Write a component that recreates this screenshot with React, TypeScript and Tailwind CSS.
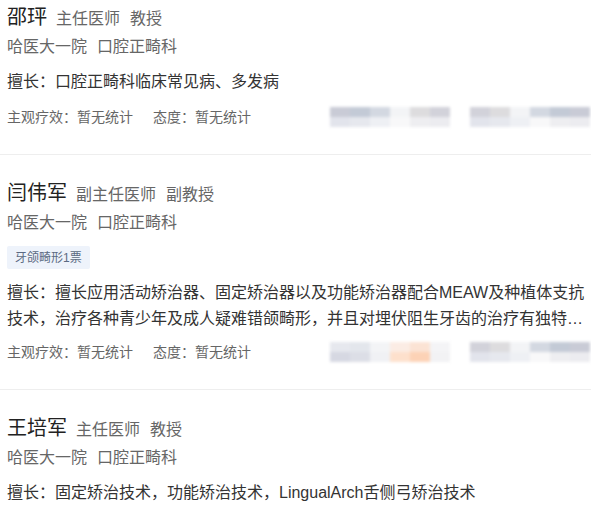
const font = { fontFamily: '"Liberation Sans", "Noto Sans CJK SC", sans-serif' };

type Doctor = {
  name: string;
  title: string;
  rank: string;
  hospital: string;
  dept: string;
  tag?: string;
  skill: string;
  stats?: boolean;
  warm?: boolean;
};

const doctors: Doctor[] = [
  {
    name: "邵玶",
    title: "主任医师",
    rank: "教授",
    hospital: "哈医大一院",
    dept: "口腔正畸科",
    skill: "擅长：口腔正畸科临床常见病、多发病",
    stats: true,
  },
  {
    name: "闫伟军",
    title: "副主任医师",
    rank: "副教授",
    hospital: "哈医大一院",
    dept: "口腔正畸科",
    tag: "牙颌畸形1票",
    skill:
      "擅长：擅长应用活动矫治器、固定矫治器以及功能矫治器配合MEAW及种植体支抗技术，治疗各种青少年及成人疑难错颌畸形，并且对埋伏阻生牙齿的治疗有独特的经验和方法",
    stats: true,
    warm: true,
  },
  {
    name: "王培军",
    title: "主任医师",
    rank: "教授",
    hospital: "哈医大一院",
    dept: "口腔正畸科",
    skill: "擅长：固定矫治技术，功能矫治技术，LingualArch舌侧弓矫治技术",
  },
];

const coolTop = ["#c9cbd6", "#c3cad6", "#d3d8e1", "#f3f4f6", "#dddcde", "#d2d2da"];
const coolBottom = ["#e2e4ec", "#e6e8ee", "#eef0f4", "#f8f8f9", "#eeeef1", "#ececf0"];
const warmTop = ["#e6e8ee", "#e3e6ec", "#f3f4f6", "#fbece4", "#fbe3d4", "#f4f4f6"];
const warmBottom = ["#d6d8e2", "#dcdee6", "#f0f1f4", "#fde0cc", "#fcd2b6", "#f2f2f4"];

// pixelated placeholder blocks (blurred in the source)
function Blur({ top, bottom }: { top: string[]; bottom: string[] }) {
  return (
    <div className="flex w-[120px] flex-col blur-[1.5px]">
      <div className="flex h-[10px]">
        {top.map((c, i) => (
          <div key={i} className="flex-1" style={{ backgroundColor: c }} />
        ))}
      </div>
      <div className="flex h-[10px]">
        {bottom.map((c, i) => (
          <div key={i} className="flex-1" style={{ backgroundColor: c }} />
        ))}
      </div>
    </div>
  );
}

function Card({ d, first }: { d: Doctor; first?: boolean }) {
  return (
    <div className={`border-b border-[#eeeeee] px-[7px] pb-[25px] ${first ? "pt-[3px]" : "pt-[24px]"}`}>
      <div className="flex h-7 items-baseline overflow-hidden leading-7">
        <span className="text-[20px] text-[#222]">{d.name}</span>
        <span className="ml-[9px] text-[16px] text-[#666]">{d.title}</span>
        <span className="ml-[10px] text-[16px] text-[#666]">{d.rank}</span>
      </div>
      <div className="mt-[4px] text-[16px] leading-6 text-[#666]">
        {d.hospital}
        <span className="ml-[10px]">{d.dept}</span>
      </div>
      {d.tag && (
        <div className="mt-[11px] flex">
          <span className="flex h-[23px] items-center rounded-[2px] bg-[#eef3fb] px-[8px] text-[12px] text-[#5b6a82]">
            {d.tag}
          </span>
        </div>
      )}
      <div
        className={`${d.tag ? "mt-[11px]" : "mt-[10px]"} -mr-[10px] line-clamp-2 text-[16px] leading-[26px] text-[#333]`}
      >
        {d.skill}
      </div>
      {d.stats && (
        <div className={`${d.tag ? "mt-[8px]" : "mt-[10px]"} flex h-6 items-center text-[14px] text-[#666]`}>
          <span>主观疗效：暂无统计</span>
          <span className="ml-5">态度：暂无统计</span>
          <div className="-mr-[6px] ml-auto flex gap-5">
            <Blur top={d.warm ? warmTop : coolTop} bottom={d.warm ? warmBottom : coolBottom} />
            <Blur top={coolTop.slice().reverse()} bottom={coolBottom} />
          </div>
        </div>
      )}
    </div>
  );
}

export default function App() {
  return (
    <div className="h-[508px] w-[591px] overflow-hidden bg-white" style={font}>
      {doctors.map((d, i) => (
        <Card key={d.name} d={d} first={i === 0} />
      ))}
    </div>
  );
}
